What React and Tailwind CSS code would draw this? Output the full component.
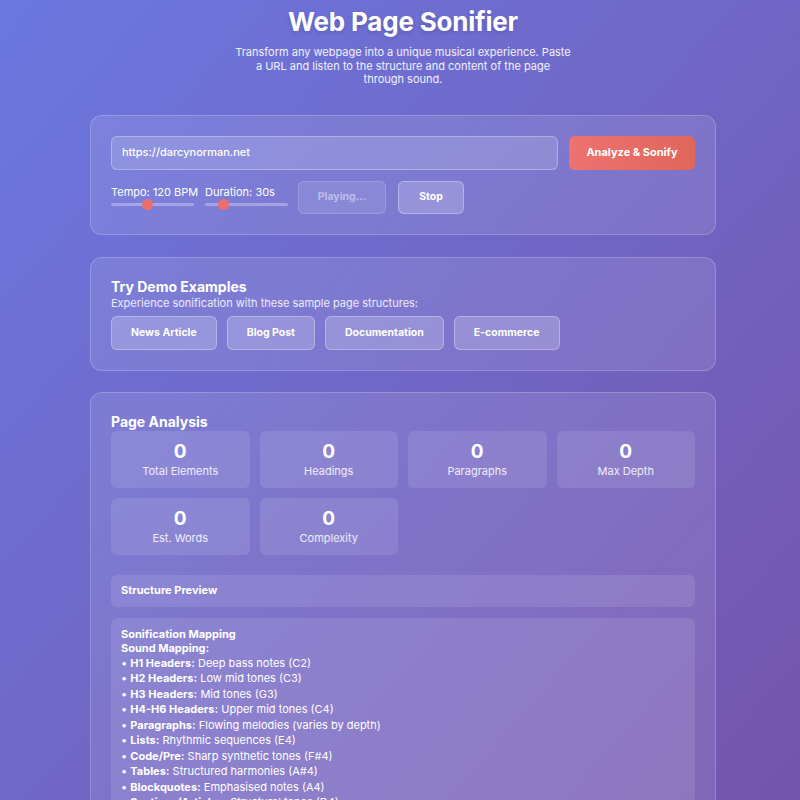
import React from "react";

const stats = [
  { value: 0, label: "Total Elements" },
  { value: 0, label: "Headings" },
  { value: 0, label: "Paragraphs" },
  { value: 0, label: "Max Depth" },
  { value: 0, label: "Est. Words" },
  { value: 0, label: "Complexity" },
];

const mappings = [
  ["H1 Headers:", "Deep bass notes (C2)"],
  ["H2 Headers:", "Low mid tones (C3)"],
  ["H3 Headers:", "Mid tones (G3)"],
  ["H4-H6 Headers:", "Upper mid tones (C4)"],
  ["Paragraphs:", "Flowing melodies (varies by depth)"],
  ["Lists:", "Rhythmic sequences (E4)"],
  ["Code/Pre:", "Sharp synthetic tones (F#4)"],
  ["Tables:", "Structured harmonies (A#4)"],
  ["Blockquotes:", "Emphasised notes (A4)"],
  ["Sections/Articles:", "Structural tones (D4)"],
  ["Links:", "Bright accents (B4)"],
];

const demos = ["News Article", "Blog Post", "Documentation", "E-commerce"];

function Slider({ label, pos }) {
  return (
    <div className="flex flex-col w-[83px]">
      <span className="text-[11px] leading-[14px] whitespace-nowrap">{label}</span>
      <div className="relative h-[11px] flex items-center">
        <div className="h-[3px] w-full rounded-full bg-white/30" />
        {/* thumb */}
        <div
          className="absolute top-0 w-[11px] h-[11px] rounded-full bg-[#ec6f6c]"
          style={{ left: pos }}
        />
      </div>
    </div>
  );
}

export default function App() {
  return (
    <div
      className="min-h-screen bg-gradient-to-br from-[#6a78e0] to-[#7452aa] text-white pb-10"
      style={{ fontFamily: "Inter, 'Noto Sans', sans-serif" }}
    >
      <div className="w-[626px] ml-[90px]">
        {/* Header */}
        <header className="text-center pt-[6px]">
          <h1 className="text-[26px] leading-[32px] font-bold tracking-[-0.2px] [text-shadow:0_2px_4px_rgba(0,0,0,0.15)]">
            Web Page Sonifier
          </h1>
          <p className="mx-auto mt-[8px] max-w-[336px] text-[11px] leading-[13.5px] text-white/90">
            Transform any webpage into a unique musical experience. Paste a URL and listen to the structure and content of the page through sound.
          </p>
        </header>

        {/* URL controls */}
        <section className="mt-[28px] rounded-xl border border-white/20 bg-white/10 p-5">
          <div className="flex gap-[11px]">
            <div className="flex-1 h-[34px] rounded-md border border-white/30 bg-white/15 flex items-center px-[10px] text-[11px] font-medium">
              https://darcynorman.net
            </div>
            <button className="w-[126px] h-[34px] rounded-md bg-gradient-to-r from-[#ee7370] to-[#e0655a] text-[11px] font-bold">
              Analyze &amp; Sonify
            </button>
          </div>
          <div className="mt-[11px] flex items-center gap-[11px]">
            <Slider label="Tempo: 120 BPM" pos={31} />
            <Slider label="Duration: 30s" pos={13} />
            <button className="ml-[-1px] w-[88px] h-[33px] rounded-md border border-white/15 bg-white/10 text-[10.5px] font-bold text-white/45">
              Playing...
            </button>
            <button className="ml-[1px] w-[66px] h-[33px] rounded-md border border-white/30 bg-white/20 text-[10.5px] font-bold">
              Stop
            </button>
          </div>
        </section>

        {/* Demo examples */}
        <section className="mt-[22px] rounded-xl border border-white/20 bg-white/10 p-5">
          <h3 className="text-[14px] leading-[18px] font-bold">Try Demo Examples</h3>
          <p className="text-[11px] leading-[14px] text-white/85">
            Experience sonification with these sample page structures:
          </p>
          <div className="mt-[6px] flex gap-[10px]">
            {demos.map((d) => (
              <button
                key={d}
                className="h-[34px] px-[19px] rounded-md border border-white/30 bg-white/20 text-[10.5px] font-bold"
              >
                {d}
              </button>
            ))}
          </div>
        </section>

        {/* Analysis */}
        <section className="mt-[21px] rounded-xl border border-white/20 bg-white/10 p-5">
          <h3 className="text-[14px] leading-[18px] font-bold">Page Analysis</h3>
          <div className="grid grid-cols-4 gap-[10px]">
            {stats.map((s) => (
              <div
                key={s.label}
                className="h-[57px] rounded-md bg-white/10 flex flex-col items-center justify-center"
              >
                <span className="text-[19px] leading-[22px] font-bold">{s.value}</span>
                <span className="mt-[1px] text-[11px] leading-[14px] text-white/85">{s.label}</span>
              </div>
            ))}
          </div>

          <div className="mt-[20px] h-[32px] rounded-md bg-white/10 flex items-center px-[10px] text-[11px] font-bold">
            Structure Preview
          </div>

          <div className="mt-[11px] rounded-md bg-white/10 px-[10px] pt-[9px] pb-[10px]">
            <h4 className="text-[11px] leading-[14px] font-bold">Sonification Mapping</h4>
            <p className="text-[11px] leading-[14px] font-bold">Sound Mapping:</p>
            <ul className="text-[11px] leading-[15.5px] mt-[1px]">
              {mappings.map(([k, v]) => (
                <li key={k}>
                  • <strong className="font-bold">{k}</strong> {v}
                </li>
              ))}
            </ul>
          </div>
        </section>
      </div>
    </div>
  );
}
